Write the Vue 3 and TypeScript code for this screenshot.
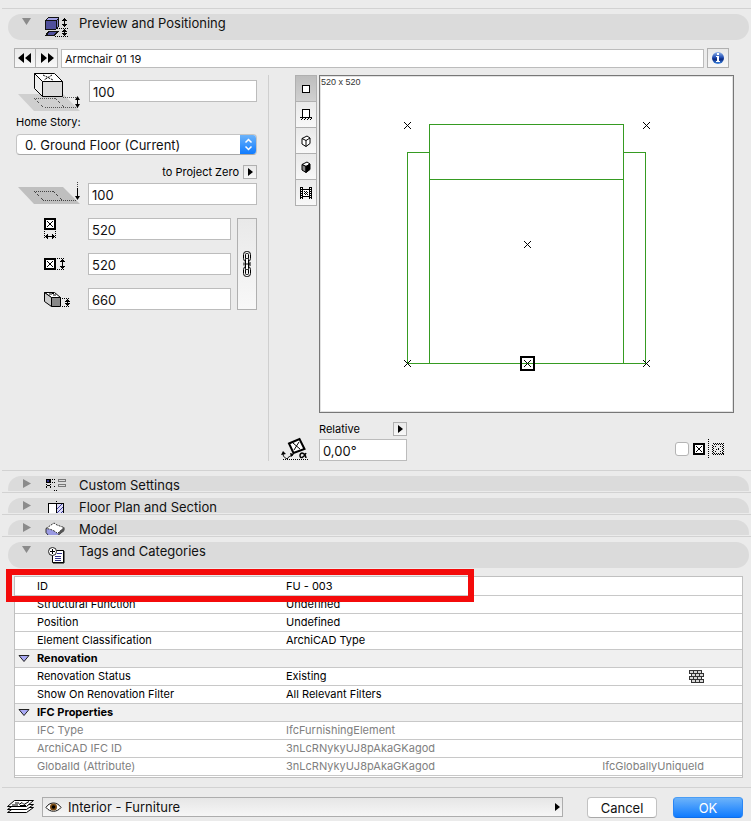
<script setup lang="ts">
import { ref } from 'vue'

interface Row {
  label: string
  value?: string
  extra?: string
  kind?: 'group' | 'locked'
  bricks?: boolean
}

const rows: Row[] = [
  { label: 'ID', value: 'FU - 003' },
  { label: 'Structural Function', value: 'Undefined' },
  { label: 'Position', value: 'Undefined' },
  { label: 'Element Classification', value: 'ArchiCAD Type' },
  { label: 'Renovation', kind: 'group' },
  { label: 'Renovation Status', value: 'Existing', bricks: true },
  { label: 'Show On Renovation Filter', value: 'All Relevant Filters' },
  { label: 'IFC Properties', kind: 'group' },
  { label: 'IFC Type', value: 'IfcFurnishingElement', kind: 'locked' },
  { label: 'ArchiCAD IFC ID', value: '3nLcRNykyUJ8pAkaGKagod', kind: 'locked' },
  { label: 'GlobalId (Attribute)', value: '3nLcRNykyUJ8pAkaGKagod', extra: 'IfcGloballyUniqueId', kind: 'locked' },
]

const name = ref('Armchair 01 19')
const toStory = ref('100')
const toZero = ref('100')
const dimX = ref('520')
const dimY = ref('520')
const dimZ = ref('660')
const angle = ref('0,00°')
const mirrored = ref(false)
const view = ref(0)
const views = ['2D Symbol', 'Side View', '3D Hidden Line', '3D Shaded', 'Preview Picture']

// Hotspot centres on the plan symbol
const hotspots: [number, number][] = [[87, 49], [326, 49], [207, 168], [87, 287], [326, 287], [207, 287]]
const bricks: [number, number][] = []
for (let r = 0; r < 4; r++) for (let c = 0; c < 3; c++) bricks.push([c * 4 + (r % 2) * 2, r * 3])
</script>

<template>
  <main class="dialog">
    <section class="section first">
      <button class="pill" type="button" aria-expanded="true">
        <svg class="tri" width="10" height="10"><path d="M0 1h9L4.500 8z" /></svg>
        <svg class="ico" width="24" height="24" shape-rendering="crispEdges">
          <path d="M0 6l3-3h11v9l-3 4H0z" fill="#111" />
          <path d="M3 4h10l-2 2H1z" fill="#a3a3e6" />
          <path d="M1 7h10v8H1z" fill="#50509c" />
          <path d="M12 7l1-2v7l-1 2z" fill="#7878c0" />
          <path d="M3 17h11l-4 5H0z" fill="#111" />
          <path d="M4 18h7l-2 3H3z" fill="#50509c" />
          <path d="M12 14.500h11M10 22.500h13" stroke="#000" stroke-dasharray="1 1" />
          <path d="M19.500 4v8M19.500 16v6" stroke="#000" />
          <path d="M19 4h1v1h1v1h1v1h-5v-1h1v-1h1zM17 10h5v1h-1v1h-1v1h-1v-1h-1v-1h-1zM19 15h1v1h1v1h1v1h-5v-1h1v-1h1zM17 19h5v1h-1v1h-1v1h-1v-1h-1v-1h-1z" />
        </svg>
        <span>Preview and Positioning</span>
      </button>
    </section>

    <div class="namebar">
      <div class="steps">
        <button class="flat" type="button" aria-label="Previous object"><svg width="14" height="10"><path d="M6 0v10L0 5zM13 0v10L7 5z" /></svg></button>
        <button class="flat" type="button" aria-label="Next object"><svg width="14" height="10"><path d="M1 0v10l6-5zM8 0v10l6-5z" /></svg></button>
      </div>
      <input v-model="name" class="field small" aria-label="Object name" />
      <button class="flat info" type="button" aria-label="Object information">
        <svg width="14" height="14">
          <defs><linearGradient id="orb" x1="0" y1="0" x2="0" y2="1"><stop offset="0" stop-color="#8fb4ec" /><stop offset=".45" stop-color="#2550b4" /><stop offset=".6" stop-color="#0a2880" /><stop offset="1" stop-color="#3f8be8" /></linearGradient></defs>
          <circle cx="7" cy="7" r="6" fill="url(#orb)" />
          <path d="M6 2h2v2H6zM5 5h3v5h1v1H5v-1h1V6H5z" fill="#fff" shape-rendering="crispEdges" />
        </svg>
      </button>
    </div>

    <div class="body">
      <div class="left">
        <div class="elev">
          <svg width="64" height="41">
            <path d="M0 22h45l17 17H16z" fill="#cfcfcf" />
            <g shape-rendering="crispEdges" fill="none" stroke="#555" stroke-dasharray="1 1">
              <path d="M16 26.500h21M27 35.500h34M45 25.500h15" /><path d="M16 26l10 10M37 26l9 9" />
            </g>
            <path d="M16.500 1.500h20l8 8h-20z" fill="#fff" stroke="#000" />
            <path d="M16.500 1.500l8 8v15l-8-8z" fill="#eee" stroke="#000" />
            <path d="M24.500 9.500h20v15h-20z" fill="#dcdcdc" stroke="#000" />
            <path d="M25 3l10 5M34 3l-8 5" stroke="#000" stroke-dasharray="2 1" />
            <path d="M59.500 26v8" stroke="#000" /><path d="M57 28h5l-2.500-4zM57 32h5l-2.500 4z" />
          </svg>
          <input v-model="toStory" class="field" aria-label="Elevation to home story" />
        </div>
        <label class="lab home" for="story">Home Story:</label>
        <div class="popup">
          <select id="story"><option>0. Ground Floor (Current)</option></select>
          <span class="knob"><svg width="9" height="13" fill="none" stroke="#fff" stroke-width="1.500"><path d="M1.500 4.500l3-3 3 3M1.500 8.500l3 3 3-3" /></svg></span>
        </div>
        <div class="zero">
          <label class="lab" for="zero">to Project Zero</label>
          <button class="flat mini" type="button" aria-label="Choose reference level"><svg width="6" height="8"><path d="M1 0v8l5-4z" /></svg></button>
        </div>
        <div class="zrow">
          <svg width="64" height="24">
            <path d="M0 6h45l17 17H16z" fill="#bfbfbf" />
            <g shape-rendering="crispEdges" fill="none" stroke="#444" stroke-dasharray="1 1">
              <path d="M16 10.500h20M25 19.500h34M59.500 1v7" /><path d="M16 10l9 9M35 10l9 9" />
            </g>
            <path d="M59.500 7v10" stroke="#000" /><path d="M57 15h5l-2.500 4z" />
          </svg>
          <input id="zero" v-model="toZero" class="field" />
        </div>
        <div class="dims">
          <svg width="28" height="22" shape-rendering="crispEdges">
            <rect x="1" y="1" width="10" height="10" fill="#fff" stroke="#000" stroke-width="2" />
            <path d="M3 3l6 6M9 3l-6 6" stroke="#000" />
            <path d="M.5 13v8M11.500 13v8" stroke="#000" stroke-dasharray="1 1" />
            <path d="M1 18h10v1H1zM2 17h1v3H2zM3 16h1v5H3zM9 17h1v3H9zM8 16h1v5H8z" />
          </svg>
          <input v-model="dimX" class="field" aria-label="Width" />
          <button class="flat chain" type="button" aria-label="Keep proportions">
            <svg width="10" height="28" fill="none" stroke="#000">
              <rect x="1.500" y="1.500" width="7" height="10" rx="3" /><rect x="3.500" y="3.500" width="3" height="6" rx="1" />
              <rect x="1.500" y="16.500" width="7" height="10" rx="3" /><rect x="3.500" y="18.500" width="3" height="6" rx="1" />
              <rect x="3.500" y="8.500" width="3" height="11" rx="1" fill="#fff" /><path d="M2 12.500v3M8 12v4M4 14h4" />
            </svg>
          </button>
          <svg width="28" height="22" shape-rendering="crispEdges">
            <rect x="1" y="6" width="10" height="10" fill="#fff" stroke="#000" stroke-width="2" />
            <path d="M3 8l6 6M9 8l-6 6" stroke="#000" />
            <path d="M13 5.500h8M13 16.500h8" stroke="#000" stroke-dasharray="1 1" />
            <path d="M18 6h1v10h-1zM17 7h3v1h-3zM16 8h5v1h-5zM17 14h3v1h-3zM16 13h5v1h-5z" />
          </svg>
          <input v-model="dimY" class="field" aria-label="Depth" />
          <svg width="28" height="22">
            <path d="M.5 4.500h10l6 5h-9z" fill="#fff" stroke="#000" />
            <path d="M.5 4.500l7 5v9l-7-5z" fill="#ccc" stroke="#000" />
            <path d="M7.500 9.500h9v9h-9z" fill="#888" stroke="#000" />
            <path d="M5 6h3M9 7h3M8 5.500h2" stroke="#000" />
            <path d="M18 10.500h8M18 18.500h8" stroke="#000" stroke-dasharray="1 1" shape-rendering="crispEdges" />
            <path d="M23 11h1v7h-1zM22 12h3v1h-3zM21 13h5v1h-5zM21 15h5v1h-5zM22 16h3v1h-3z" shape-rendering="crispEdges" />
          </svg>
          <input v-model="dimZ" class="field" aria-label="Height" />
        </div>
      </div>

      <div class="right">
        <div class="tools">
          <button v-for="(v, i) in views" :key="v" class="flat tool" :class="{ on: view === i }" type="button" :aria-label="v" @click="view = i">
            <svg v-if="i === 0" width="12" height="12" shape-rendering="crispEdges"><rect x="2.500" y="2.500" width="7" height="7" fill="#fff" stroke="#000" /></svg>
            <svg v-else-if="i === 1" width="12" height="12" shape-rendering="crispEdges"><rect x="2.500" y=".5" width="7" height="8" fill="#fff" stroke="#000" /><path d="M0 8.500h12M1 11l2-2M4 11l2-2M7 11l2-2M10 11l2-2" stroke="#000" /></svg>
            <svg v-else-if="i === 2" width="12" height="12"><path d="M2 3.500l5-2.500 3 2v5.500l-4 3-4-2.500zM2 3.500l4 2v6M6 5.500l4-2.500" fill="#fff" stroke="#000" /></svg>
            <svg v-else-if="i === 3" width="12" height="12"><path d="M2 3.500l5-2.500 3 2-4 2.500z" fill="#fff" stroke="#000" /><path d="M2 3.500l4 2v6L2 9z" fill="#888" stroke="#000" /><path d="M6 5.500l4-2.500v5.500l-4 3z" stroke="#000" /></svg>
            <svg v-else width="12" height="12" shape-rendering="crispEdges"><path d="M0 0h3v12H0zM9 0h3v12H9zM3 2h6v1H3zM3 9h6v1H3z" /><path d="M3 3h6v6H3z" fill="#fff" /><path d="M1.500 1v11M10.500 1v11" stroke="#fff" stroke-dasharray="1 1" /><path d="M4 4h1v1H4zM6 4h1v1H6zM5 5h1v1H5zM7 5h1v1H7zM4 6h1v1H4zM6 6h1v1H6zM5 7h1v1H5zM7 7h1v1H7z" /></svg>
          </button>
        </div>
        <div class="canvas">
          <span class="size">520 x 520</span>
          <svg class="plan" viewBox="0 0 413 336" fill="none" shape-rendering="crispEdges">
            <g stroke="#369b22">
              <path d="M109.500 287V48.500h194V287M87.500 287V76.500h22M303.500 76.500h22V287M109 103.500h194M87 287.500h239" />
            </g>
            <rect x="201" y="281" width="13" height="13" stroke="#000" stroke-width="2" />
            <path v-for="([x, y], i) in hotspots" :key="i" :transform="`translate(${x} ${y})`" d="M-3-3L4 4M4-3L-3 4" stroke="#000" shape-rendering="auto" />
          </svg>
        </div>
        <svg class="rot" width="28" height="24">
          <path d="M8 6.500L18.500 2l5 10L12.500 16z" fill="#fff" stroke="#000" stroke-width="2" />
          <path d="M12 6l7 6M18 5l-5 8" stroke="#000" />
          <path d="M2 22.500h26" stroke="#000" stroke-dasharray="1 1" shape-rendering="crispEdges" />
          <path d="M2 16c0 3 1 5 5 6M6 22c1-2 3-3 6-4" stroke="#000" fill="none" /><path d="M0 18l2-4 3 3zM9 16l4 1-3 3z" />
          <path d="M25 16c-2 5-6 6-6 2.500S24 15 25 21" stroke="#000" stroke-width="1.500" fill="none" />
        </svg>
        <div class="under">
          <div class="rel">
            <div class="relhead">
              <label class="lab" for="angle">Relative</label>
              <button class="flat mini" type="button" aria-label="Choose angle mode"><svg width="6" height="8"><path d="M1 0v8l5-4z" /></svg></button>
            </div>
            <input id="angle" v-model="angle" class="field" />
          </div>
          <label class="mirror">
            <input v-model="mirrored" type="checkbox" aria-label="Mirror" />
            <svg width="31" height="20" shape-rendering="crispEdges">
              <rect x="1" y="5" width="10" height="10" fill="#fff" stroke="#000" stroke-width="2" />
              <path d="M3 7l6 6M9 7l-6 6" stroke="#000" />
              <path d="M15.500 0v20" stroke="#000" stroke-dasharray="1 1" />
              <rect x="19.500" y="4.500" width="11" height="11" fill="none" stroke="#000" stroke-dasharray="1 1" />
              <rect x="20.500" y="5.500" width="9" height="9" fill="none" stroke="#000" stroke-dasharray="1 1" />
              <path d="M22 7h1v1h-1zM27 7h1v1h-1zM25 9h1v2h-1zM23 10h1v1h-1zM22 12h1v1h-1zM27 12h1v1h-1z" />
            </svg>
          </label>
        </div>
      </div>
    </div>

    <section class="section closed">
      <div class="clip">
        <button class="pill" type="button" aria-expanded="false">
          <svg class="tri" width="10" height="12"><path d="M1 0v9l8-4.500z" /></svg>
          <svg class="ico" width="24" height="24" shape-rendering="crispEdges">
            <path d="M1 3h5v4H1zM7 3h1v1H7zM9 3h1v1H9zM7 6h1v1H7zM9 6h1v1H9zM1 8h1v1H1zM5 8h1v1H5zM2 9h3v1H2zM1 10h1v2H1zM5 10h1v2H5zM9 10h1v1H9zM9 14h1v1H9zM11 14h1v1h-1z" />
            <path d="M2 4h2v2H2z" fill="#33338a" />
            <path d="M13.500 3.500h7v2h-7zM13.500 8.500h7v2h-7z" fill="none" stroke="#777" />
          </svg>
          <span>Custom Settings</span>
        </button>
      </div>
    </section>

    <section class="section closed">
      <div class="clip">
        <button class="pill" type="button" aria-expanded="false">
          <svg class="tri" width="10" height="12"><path d="M1 0v9l8-4.500z" /></svg>
          <svg class="ico" width="24" height="24" shape-rendering="crispEdges">
            <path d="M3 5h16v12H3z" /><path d="M4 6h7v10H4z" fill="#fff" /><path d="M12 6h6v10h-6z" fill="#dcdcf6" />
            <path d="M12 11l5-5M12 15l6-6M14 17l4-4" stroke="#3a3a9c" /><path d="M11 3h1v1h-1z" />
          </svg>
          <span>Floor Plan and Section</span>
        </button>
      </div>
    </section>

    <section class="section closed">
      <div class="clip">
        <button class="pill" type="button" aria-expanded="false">
          <svg class="tri" width="10" height="12"><path d="M1 0v9l8-4.500z" /></svg>
          <svg class="ico" width="24" height="24">
            <path d="M1 8.500v4l4 5h5l9-7v-3z" fill="#9a9ae2" stroke="#333" />
            <path d="M13 12l6-5v4l-5 4z" fill="#555" />
            <path d="M1 8.500l8-5.500 3 2 7 2.500-6.500 6C10 11 6 9 1 8.500z" fill="#fff" stroke="#333" stroke-dasharray="2 1" />
          </svg>
          <span>Model</span>
        </button>
      </div>
    </section>

    <section class="section">
      <button class="pill" type="button" aria-expanded="true">
        <svg class="tri" width="10" height="10"><path d="M0 1h9L4.500 8z" /></svg>
        <svg class="ico" width="24" height="24">
          <path d="M7.500 8.500h11v12h-11z" fill="#fff" stroke="#000" /><path d="M18 9h1v12H8" fill="none" stroke="#000" />
          <path d="M12 11.500h5M10 14.500h6M10 16.500h6M10 18.500h6" stroke="#33338a" />
          <circle cx="7.500" cy="9.500" r="4" fill="#fff" stroke="#222" /><path d="M5 9.500h5M7.500 7v5" stroke="#000" />
        </svg>
        <span>Tags and Categories</span>
      </button>
    </section>

    <div class="sheet">
      <table>
        <colgroup><col class="c1" /><col class="c2" /><col /></colgroup>
        <tbody>
          <tr v-for="(r, i) in rows" :key="i" :class="r.kind">
            <td class="key">
              <button v-if="r.kind === 'group'" class="fold" type="button" :aria-label="'Collapse ' + r.label">
                <svg width="12" height="8"><path d="M1 .5h10L6 6.500z" fill="#a9a9f5" stroke="#222" /></svg>
              </button>
              {{ r.label }}
            </td>
            <td>{{ r.value }}</td>
            <td class="extra">
              <svg v-if="r.bricks" width="15" height="13" shape-rendering="crispEdges" fill="#d8d8d8" stroke="#333">
                <rect v-for="([x, y], k) in bricks" :key="k" :x="x + 0.5" :y="y + 0.5" width="4" height="3" />
              </svg>
              {{ r.extra }}
            </td>
          </tr>
        </tbody>
      </table>
      <div class="highlight"></div>
    </div>

    <footer class="foot">
      <svg width="28" height="17">
        <g fill="#fff" stroke="#000"><path d="M.5 14.500l7-5h19l-7 5z" /><path d="M.5 11.500l7-5h19l-7 5z" /><path d="M.5 8.500l7-6h19l-7 6z" /></g>
        <path d="M5 7h6M8 5h4M12 6.500l3-2 2 2 5-3M13 7.500h6" stroke="#000" fill="none" />
      </svg>
      <div class="layer">
        <svg class="eye" width="17" height="12"><path d="M1 6.500C4 1 12 0 16 6.500 12 11.500 5 11.500 1 6.500z" fill="#fff" stroke="#111" /><circle cx="8.500" cy="6" r="3.500" fill="#7a4a12" /><circle cx="8.500" cy="6" r="1.800" /></svg>
        <select aria-label="Layer"><option>Interior - Furniture</option></select>
        <svg class="go" width="6" height="8"><path d="M1 0v8l5-4z" /></svg>
      </div>
      <button class="cmd" type="button">Cancel</button>
      <button class="cmd ok" type="button">OK</button>
    </footer>
  </main>
</template>

<style>
body { margin: 0; background: #ebebeb; }
</style>

<style scoped>
* { box-sizing: border-box; }
.dialog { min-height: 100vh; padding-top: 8px; background: #ebebeb; color: #111; font: 11px/14px Inter, "Liberation Sans", sans-serif; overflow: hidden; }
button, input, select { font: inherit; color: inherit; margin: 0; padding: 0; border-radius: 0; }
svg { display: block; flex: none; }

.section { margin-left: 2px; padding: 5px 2px 1px 6px; border-top: 1px solid #d2d2d2; }
.section.first, .section:last-of-type { padding-bottom: 0; }
.clip { height: 15px; overflow: hidden; }
.pill { display: grid; grid-template-columns: 23px 34px 1fr; align-items: start; width: 100%; height: 26px; padding-left: 14px; border: 0; border-radius: 13px; background: #dbdbdb; font-size: 13px; line-height: 18px; text-align: left; }
.tri { margin-top: 3px; fill: #8b8b8b; }

.flat { display: flex; align-items: center; justify-content: center; border: 1px solid #b0b0b0; background: linear-gradient(#e9e9e9, #f8f8f8); }
.field { width: 100%; min-width: 0; height: 22px; padding: 2px 3px 0; border: 1px solid #bcbcbc; background: #fff; font-size: 13px; outline: 0; }
.small { height: 19px; padding: 1px 3px 0; font-size: 11px; }
.lab { color: #000; white-space: nowrap; }
.mini { width: 14px; height: 14px; }

.namebar { display: flex; align-items: flex-end; gap: 3px; padding: 8px 22px 0 14px; }
.steps { display: flex; }
.steps .flat { width: 22px; height: 20px; }
.steps .flat + .flat { border-left: 0; }
.info { flex: none; width: 22px; height: 20px; }

.body { display: flex; padding: 0 17px 9px 16px; }
.left { flex: none; width: 241px; padding-top: 4px; }
.elev { display: flex; gap: 7px; padding-left: 2px; height: 40px; }
.elev .field { margin-top: 8px; }
.home { display: block; margin-top: 3px; }
.popup { display: flex; height: 21px; margin-top: 5px; border: 1px solid #c4c4c4; border-bottom-color: #a8a8a8; border-radius: 4px; background: #fff; overflow: hidden; }
.popup select { flex: 1; min-width: 0; padding-left: 8px; border: 0; background: none; appearance: none; font-size: 13px; outline: 0; }
.knob { display: flex; align-items: center; justify-content: center; width: 16px; background: linear-gradient(#6cb3fa, #0f7bff); }
.zero { display: flex; justify-content: flex-end; gap: 4px; margin-top: 10px; }
.zrow { display: flex; align-items: flex-end; gap: 6px; height: 22px; margin-top: 4px; padding-left: 2px; }
.dims { display: grid; grid-template-columns: 44px 149px 20px; grid-auto-rows: 22px; row-gap: 13px; margin-top: 13px; padding-left: 28px; }
.dims .field { width: 143px; }
.chain { grid-column: 3; grid-row: 1 / span 3; height: 92px; }

.right { flex: 1; display: grid; grid-template-columns: 48px 1fr; column-gap: 2px; row-gap: 9px; margin-left: 11px; padding-top: 7px; border-left: 1px solid transparent; border-image: linear-gradient(transparent 8px, #cfcfcf 8px) 1; }
.tools { display: flex; flex-direction: column; align-items: flex-end; }
.tool { width: 22px; height: 27px; margin-bottom: -1px; }
.tool.on { background: linear-gradient(#bdbdbd, #d0d0d0); }
.canvas { position: relative; border: 1px solid #777; background: #fff; box-shadow: inset 0 0 0 1px #e2e2e2; }
.size { position: absolute; left: 1px; top: 1px; color: #333; font: 9px/10px "Liberation Sans", sans-serif; }
.plan { width: 100%; height: 336px; }
.rot { align-self: end; margin-left: 12px; }
.under { display: flex; justify-content: space-between; align-items: flex-end; padding-right: 10px; }
.rel { width: 88px; }
.relhead { display: flex; justify-content: space-between; margin-bottom: 3px; }
.mirror { display: flex; align-items: center; gap: 4px; height: 24px; }
.mirror input { appearance: none; width: 14px; height: 14px; border: 1px solid #b4b4b4; border-radius: 3px; background: #fff; }

.sheet { position: relative; margin: 8px 8px 9px 14px; padding-bottom: 1px; border: 1px solid #c0c0c0; background: #fff; }
table { width: 100%; table-layout: fixed; border-spacing: 0; color: #000; }
.c1 { width: 271px; }
.c2 { width: 250px; }
td { height: 18px; padding: 0; border-bottom: 1px solid #c8c8c8; line-height: 17px; white-space: nowrap; }
tr:first-child td { height: 19px; line-height: 18px; }
.key { position: relative; padding-left: 22px; }
.extra { padding-right: 38px; text-align: right; }
.extra svg { margin-left: auto; }
.group td { background: #f0f0f0; font-weight: 700; }
.locked td { color: #808080; }
.fold { position: absolute; left: 3px; top: 5px; border: 0; background: none; }
.highlight { position: absolute; left: -9px; top: -8px; width: 468px; height: 33px; border: 6px solid #f40b0b; pointer-events: none; }

.foot { display: flex; align-items: flex-start; gap: 16px; margin-left: 2px; padding: 9px 8px 3px 5px; border-top: 1px solid #d2d2d2; }
.foot > svg { margin: 1px -9px 0 0; }
.layer { position: relative; flex: 1; margin-right: 8px; }
.layer select { display: block; width: 100%; height: 20px; padding-left: 25px; border: 1px solid #adadad; background: linear-gradient(#e6e6e6, #f6f6f6); appearance: none; font-size: 13px; outline: 0; }
.eye { position: absolute; left: 3px; top: 4px; }
.go { position: absolute; right: 3px; top: 6px; }
.cmd { width: 70px; height: 21px; border: 1px solid #c2c2c2; border-bottom-color: #a9a9a9; border-radius: 4px; background: #fff; font-size: 13px; }
.ok { border-color: #4a9df5 #2a86f5 #0f6de8; background: linear-gradient(#6cb3fa, #0f7bff); color: #fff; }
</style>
